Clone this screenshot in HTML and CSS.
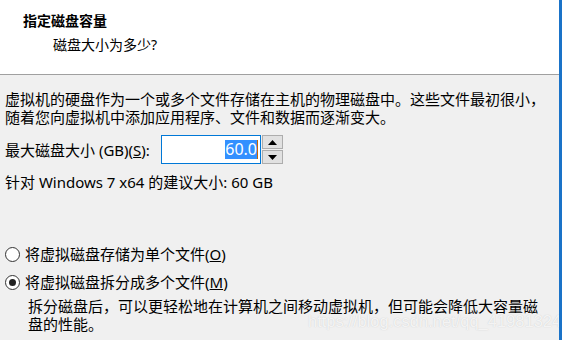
FILE: index.html
```html
<!DOCTYPE html>
<html lang="zh-CN">
<head>
    <meta charset="UTF-8">
    <title>指定磁盘容量</title>
    <link rel="stylesheet" href="styles.css">
</head>
<body>
    <div class="janela">
        <div class="cabecalho">
            <div class="titulo">指定磁盘容量</div>
            <div class="subtitulo">磁盘大小为多少?</div>
        </div>

        <div class="conteudo">
            <p class="descricao">虚拟机的硬盘作为一个或多个文件存储在主机的物理磁盘中。这些文件最初很小，<br>随着您向虚拟机中添加应用程序、文件和数据而逐渐变大。</p>

            <div class="linha-tamanho">
                <span class="rotulo">最大磁盘大小 (GB)(<u>S</u>):</span>
                <div class="campo"><span class="selecionado">60.0</span><span class="cursor"></span></div>
                <div class="spinner">
                    <div class="seta"><svg width="9" height="5" viewBox="0 0 9 5"><path d="M0 5 L4.5 0 L9 5 Z" fill="#000"/></svg></div>
                    <div class="seta"><svg width="9" height="5" viewBox="0 0 9 5"><path d="M0 0 L4.5 5 L9 0 Z" fill="#000"/></svg></div>
                </div>
            </div>

            <p class="sugestao">针对 Windows 7 x64 的建议大小: 60 GB</p>

            <div class="opcao primeira">
                <span class="radio"></span>
                <span>将虚拟磁盘存储为单个文件(<u>O</u>)</span>
            </div>
            <div class="opcao">
                <span class="radio marcado"></span>
                <span>将虚拟磁盘拆分成多个文件(<u>M</u>)</span>
            </div>
            <p class="explicacao">拆分磁盘后，可以更轻松地在计算机之间移动虚拟机，但可能会降低大容量磁<br>盘的性能。</p>
        </div>

        <div class="marca">https://blog.csdn.net/qq_41981324</div>
    </div>
</body>
</html>
```

FILE: styles.css
```css
body {
    margin: 0;
    padding: 0;
    width: 562px;
    height: 340px;
    overflow: hidden;
    font-family: "Noto Sans", "Noto Sans CJK SC", sans-serif;
    color: #000;
}

.janela {
    position: relative;
    width: 559px;
    height: 340px;
    overflow: hidden;
    background-color: #f0f0f0;
    border-right: 3px solid #1a73c8;
}

.cabecalho {
    height: 75px;
    background-color: #fff;
    border-bottom: 1px solid #a0a0a0;
    box-sizing: border-box;
    padding-top: 12px;
}

.titulo {
    padding-left: 23px;
    font-size: 14px;
    font-weight: bold;
    line-height: 18px;
}

.subtitulo {
    padding-left: 53px;
    margin-top: 6px;
    font-size: 14px;
    line-height: 18px;
}

.conteudo {
    padding-left: 5px;
    font-size: 15px;
    line-height: 18px;
}

.descricao {
    margin: 15px 0 0 0;
}

.linha-tamanho {
    display: flex;
    align-items: center;
    margin-top: 9px;
    height: 29px;
}

.rotulo {
    width: 156px;
}

.campo {
    width: 100px;
    height: 29px;
    box-sizing: border-box;
    border: 1px solid #0078d7;
    background-color: #fff;
    display: flex;
    justify-content: flex-end;
    align-items: center;
    padding-right: 2px;
    font-size: 16px;
}

.selecionado {
    background-color: #3390ff;
    color: #fff;
    line-height: 19px;
}

.cursor {
    width: 1px;
    height: 19px;
    background-color: #c86400;
}

.spinner {
    width: 21px;
    height: 29px;
    margin-left: 1px;
    display: flex;
    flex-direction: column;
    gap: 1px;
}

.seta {
    flex: 1;
    border: 1px solid #adadad;
    background-color: #e1e1e1;
    display: flex;
    align-items: center;
    justify-content: center;
}

.sugestao {
    margin: 9px 0 0 0;
}

.opcao {
    display: flex;
    align-items: center;
    margin-top: 10px;
}

.opcao.primeira {
    margin-top: 54px;
}

.radio {
    width: 15px;
    height: 15px;
    box-sizing: border-box;
    border: 1px solid #333;
    border-radius: 50%;
    background-color: #fff;
    margin-right: 5px;
    position: relative;
}

.radio.marcado::after {
    content: "";
    position: absolute;
    left: 3px;
    top: 3px;
    width: 7px;
    height: 7px;
    border-radius: 50%;
    background-color: #222;
}

.explicacao {
    margin: 6px 0 0 23px;
}

.marca {
    position: absolute;
    left: 308px;
    top: 312px;
    white-space: nowrap;
    font-family: "Liberation Sans", Arial, sans-serif;
    font-size: 16.5px;
    color: rgba(255, 255, 255, 0.8);
    text-shadow: 0 0 1px rgba(170, 170, 170, 0.6);
}
```
